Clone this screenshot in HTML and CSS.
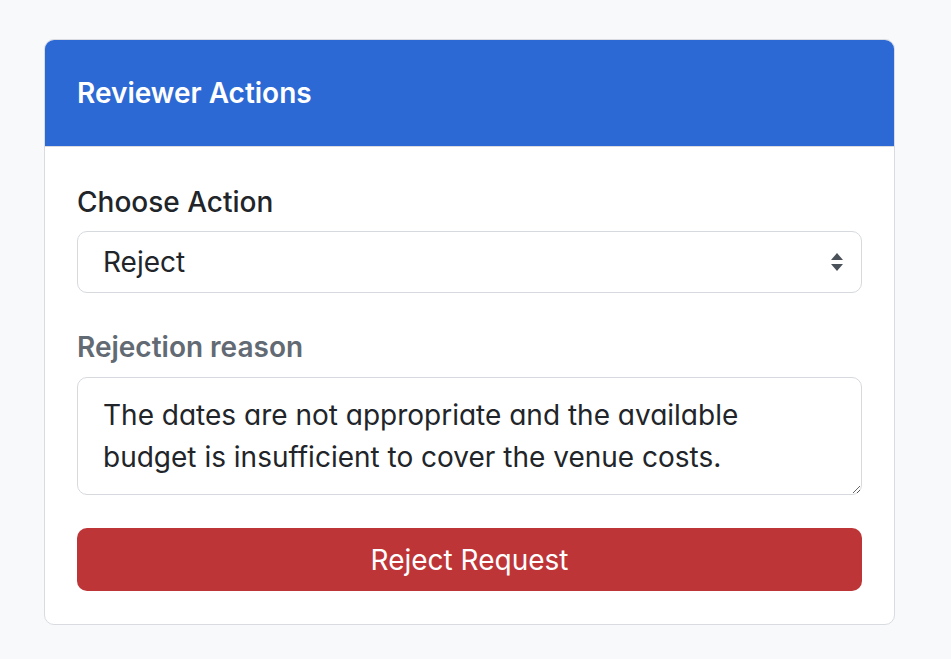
FILE: index.html
```html
<!DOCTYPE html>
<html lang="en">
<head>
    <meta charset="UTF-8">
    <meta name="viewport" content="width=device-width, initial-scale=1.0">
    <title>Reviewer Actions</title>
    <link rel="stylesheet" href="styles.css">
</head>
<body>
    <div class="card">
        <div class="card-header">Reviewer Actions</div>
        <form class="card-body" id="reviewForm">
            <div class="form-group">
                <label for="action">Choose Action</label>
                <div class="select-wrap">
                    <select id="action">
                        <option value="approve">Approve</option>
                        <option value="reject" selected>Reject</option>
                    </select>
                    <svg class="select-arrows" width="14" height="20" viewBox="0 0 14 20">
                        <path d="M7 1 L13 8 H1 Z" fill="#4b5159"/>
                        <path d="M7 19 L13 12 H1 Z" fill="#4b5159"/>
                    </svg>
                </div>
            </div>
            <div class="form-group">
                <label for="reason" class="muted">Rejection reason</label>
                <textarea id="reason" rows="2">The dates are not appropriate and the available
budget is insufficient to cover the venue costs.</textarea>
            </div>
            <button type="submit" class="btn-danger">Reject Request</button>
        </form>
    </div>
</body>
</html>
```

FILE: styles.css
```css
body {
    font-family: Inter, "Noto Sans", sans-serif;
    margin: 0;
    padding: 0;
    background-color: #f8f9fb;
    color: #212529;
}
.card {
    width: 851px;
    box-sizing: border-box;
    margin: 39px 0 0 44px;
    background: #fff;
    border: 1.5px solid #d8dbe0;
    border-radius: 10px;
    overflow: hidden;
}
.card-header {
    background-color: #2d69d4;
    color: #fff;
    font-size: 28px;
    font-weight: 600;
    line-height: 34px;
    padding: 36px 32px;
    border-bottom: 1.5px solid #d8dbe0;
}
.card-body {
    padding: 34px 32px 33px;
}
.form-group {
    margin-bottom: 33px;
}
label {
    display: block;
    font-size: 28px;
    font-weight: 500;
    line-height: 42px;
    margin-bottom: 8px;
}
label.muted {
    color: #626a73;
    font-weight: 600;
    margin-bottom: 9px;
}
.select-wrap {
    position: relative;
}
select, textarea {
    display: block;
    width: 100%;
    box-sizing: border-box;
    font-family: Inter, "Noto Sans", sans-serif;
    font-size: 28px;
    color: #212529;
    background: #fff;
    border: 1.5px solid #d6d9de;
    border-radius: 10px;
}
select {
    appearance: none;
    -webkit-appearance: none;
    height: 62px;
    padding: 0 60px 0 25px;
    line-height: 42px;
}
.select-arrows {
    position: absolute;
    right: 18px;
    top: 21px;
    pointer-events: none;
}
textarea {
    height: 118px;
    padding: 15.5px 25px;
    line-height: 42px;
    resize: vertical;
    font-feature-settings: "cv11";
}
.btn-danger {
    display: block;
    width: 100%;
    height: 63px;
    border: none;
    border-radius: 10px;
    background-color: #be3538;
    color: #fff;
    font-family: Inter, "Noto Sans", sans-serif;
    font-size: 28px;
    cursor: pointer;
}
.btn-danger:hover {
    background-color: #a82e31;
}
```
